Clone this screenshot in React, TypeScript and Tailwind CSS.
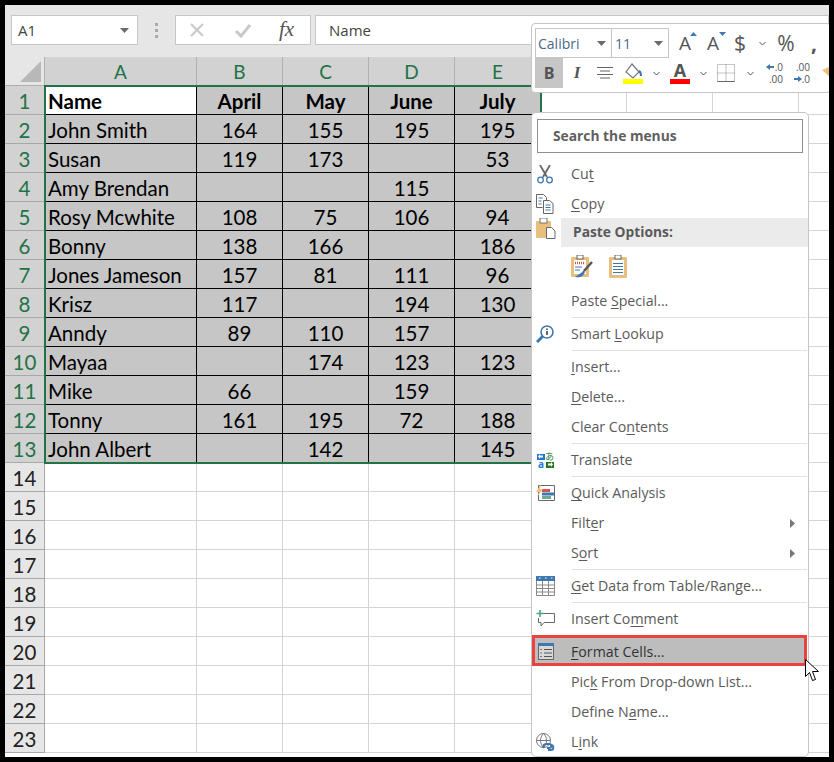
const cols = ["A", "B", "C", "D", "E", "F", "G", "H", "I"];

const rows: string[][] = [
  ["Name", "April", "May", "June", "July"],
  ["John Smith", "164", "155", "195", "195"],
  ["Susan", "119", "173", "", "53"],
  ["Amy Brendan", "", "", "115", ""],
  ["Rosy Mcwhite", "108", "75", "106", "94"],
  ["Bonny", "138", "166", "", "186"],
  ["Jones Jameson", "157", "81", "111", "96"],
  ["Krisz", "117", "", "194", "130"],
  ["Anndy", "89", "110", "157", ""],
  ["Mayaa", "", "174", "123", "123"],
  ["Mike", "66", "", "159", ""],
  ["Tonny", "161", "195", "72", "188"],
  ["John Albert", "", "142", "", "145"],
];

function Caret({ className }: { className: string }) {
  return (
    <svg width="9" height="5" viewBox="0 0 9 5" className={className}>
      <path d="M0 0h9L4.5 5z" fill="#6b6b6b" />
    </svg>
  );
}

function Chevron({ className }: { className: string }) {
  return (
    <svg width="7" height="5" viewBox="0 0 7 5" className={className}>
      <path d="M.5 1l3 3 3-3" fill="none" stroke="#555" />
    </svg>
  );
}

function FormulaBar() {
  return (
    <div className="h-[52px] bg-[#e6e6e6] flex items-start pt-[10px] pl-[6px] gap-[4px]">
      <div className="w-[127px] h-[30px] bg-white border border-[#c6c6c6] flex items-center justify-between pl-[6px] pr-[8px] text-[15px] text-[#444] font-['Open_Sans']">
        A1
        <Caret className="" />
      </div>
      <div className="w-[29px] h-[30px] flex flex-col items-center justify-center gap-[3px]">
        <div className="w-[3px] h-[3px] bg-[#aaa]" />
        <div className="w-[3px] h-[3px] bg-[#aaa]" />
        <div className="w-[3px] h-[3px] bg-[#aaa]" />
      </div>
      <div className="w-[136px] h-[30px] bg-white border border-[#c6c6c6] flex items-center pl-[13px]">
        <svg width="18" height="16" viewBox="0 0 18 16">
          <path d="M2 2l12 12M14 2L2 14" stroke="#c9c9c9" strokeWidth="2" fill="none" />
        </svg>
        <svg width="18" height="16" viewBox="0 0 18 16" className="ml-[27px]">
          <path d="M2 9l5 5L16 3" stroke="#c9c9c9" strokeWidth="3" fill="none" />
        </svg>
        <span className="ml-[27px] text-[21px] italic text-[#555] font-['Liberation_Serif']">fx</span>
      </div>
      <div className="flex-1 h-[30px] bg-white border border-[#c6c6c6] flex items-center pl-[13px] text-[15px] text-[#444] font-['Open_Sans']">
        Name
      </div>
    </div>
  );
}

function Sheet() {
  return (
    <div className="relative grid grid-cols-[40px_152px_repeat(8,86px)] font-['Lato'] text-[20.5px] leading-[30px] text-black">
      <div className="h-[29px] bg-[#e6e6e6] border-r border-b border-[#b0b0b0] flex items-center justify-end pr-[3px]">
        <svg width="21" height="21" viewBox="0 0 21 21">
          <path d="M21 0v21H0z" fill="#b8b8b8" />
        </svg>
      </div>
      {cols.map((c, i) => (
        <div
          key={c}
          className={
            i < 5
              ? "h-[29px] bg-[#d2d2d2] border-r border-[#b0b0b0] flex items-center justify-center text-[#217346] text-[19px]"
              : "h-[29px] bg-[#e6e6e6] border-r border-b border-[#b0b0b0] flex items-center justify-center text-[#444] text-[19px]"
          }
        >
          {c}
        </div>
      ))}
      {Array.from({ length: 23 }, (_, r) => {
        const row = rows[r];
        return (
          <div key={r} className="contents">
            <div
              className={
                row
                  ? "h-[29px] bg-[#d2d2d2] border-r border-b border-[#a8a8a8] text-[#217346] text-center"
                  : "h-[29px] bg-[#e6e6e6] border-r border-b border-[#a8a8a8] text-[#222] text-center"
              }
            >
              {r + 1}
            </div>
            {cols.map((c, i) => {
              const text = row && i < 5 ? row[i] : "";
              const inSel = !!row && i < 5;
              let cls = "h-[29px] border-r border-b border-[#d4d4d4] bg-white";
              if (inSel) cls = "h-[29px] border-r border-b border-black bg-[#c6c6c6]";
              if (inSel && r === 0 && i === 0) cls = "h-[29px] border-r border-b border-black bg-white";
              return (
                <div
                  key={c}
                  className={
                    cls +
                    (i === 0 ? " pl-[3px]" : " text-center") +
                    (r === 0 ? " font-bold" : "") +
                    " whitespace-nowrap overflow-hidden"
                  }
                >
                  {text}
                </div>
              );
            })}
          </div>
        );
      })}
      <div className="absolute left-[39px] top-[28px] w-[498px] h-[379px] border-2 border-[#217346] pointer-events-none" />
    </div>
  );
}

function MiniToolbar() {
  return (
    <div className="absolute left-[526px] top-[18px] w-[300px] h-[70px] bg-white border border-[#c6c6c6] rounded-[4px] overflow-hidden font-['Open_Sans'] text-[#555]">
      <div className="flex w-max items-center h-[30px] mt-[4px] ml-[3px]">
        <div className="w-[77px] h-[30px] border border-[#c6c6c6] flex items-center justify-between pl-[2px] pr-[5px] text-[14px] text-[#4a6a8a]">
          Calibri
          <Caret className="" />
        </div>
        <div className="w-[57px] h-[30px] border border-[#c6c6c6] border-l-0 flex items-center justify-between pl-[3px] pr-[5px] text-[14px] text-[#4a6a8a]">
          11
          <Caret className="" />
        </div>
        <div className="relative w-[28px] ml-[2px] text-center text-[19px] leading-none">
          A
          <svg width="7" height="4" viewBox="0 0 7 4" className="absolute right-[2px] top-[-2px]">
            <path d="M0 4l3.5-4L7 4z" fill="#3f78b0" />
          </svg>
        </div>
        <div className="relative w-[28px] text-center text-[19px] leading-none">
          A
          <svg width="7" height="4" viewBox="0 0 7 4" className="absolute right-[1px] top-[-2px]">
            <path d="M0 0l3.5 4L7 0z" fill="#3f78b0" />
          </svg>
        </div>
        <div className="w-[26px] text-center text-[21px] leading-none">$</div>
        <Chevron className="ml-[6px]" />
        <div className="w-[40px] text-center text-[21px] leading-none">%</div>
        <div className="w-[16px] text-center text-[21px] font-bold leading-none">,</div>
      </div>
      <div className="flex w-max items-center h-[30px] ml-[3px]">
        <div className="w-[28px] h-[30px] bg-[#c6c6c6] flex items-center justify-center text-[16px] font-bold">B</div>
        <div className="w-[28px] text-center text-[17px] font-bold italic font-['Liberation_Serif']">I</div>
        <svg width="28" height="14" viewBox="0 0 28 14">
          <path d="M6 1.5h16M9 5h10M6 8.5h16M9 12h10" stroke="#666" fill="none" />
        </svg>
        <svg width="22" height="22" viewBox="0 0 22 22" className="ml-[3px]">
          <path d="M10 2l7 8-6 6-7-6z" fill="none" stroke="#777" strokeWidth="1.2" />
          <path d="M17 9c2 1 2 3 2 5" stroke="#3f78b0" strokeWidth="2" fill="none" />
          <rect x="1" y="17" width="20" height="5" fill="#ffff00" />
        </svg>
        <Chevron className="ml-[9px]" />
        <div className="relative w-[20px] h-[22px] ml-[10px] text-center text-[18px] font-bold leading-[18px]">
          <span className="relative top-[-1px]">A</span>
          <div className="absolute left-0 bottom-0 w-[20px] h-[5px] bg-[#ff0000]" />
        </div>
        <Chevron className="ml-[10px]" />
        <svg width="18" height="18" viewBox="0 0 18 18" className="ml-[10px]">
          <path d="M.5.5h17v17H.5zM9 .5v17M.5 9h17" fill="none" stroke="#888" strokeDasharray="1 1" />
          <path d="M.5 17.5h17" stroke="#666" />
        </svg>
        <Chevron className="ml-[12px]" />
        <div className="relative w-[17px] h-[24px] ml-[12px] text-[10px] leading-[12px] text-right">
          <div>.0</div>
          <div>.00</div>
          <svg width="8" height="6" viewBox="0 0 8 6" className="absolute left-0 top-[3px]">
            <path d="M0 3l4-3v2h4v2H4v2z" fill="#3f78b0" />
          </svg>
        </div>
        <div className="relative w-[16px] h-[24px] ml-[11px] text-[10px] leading-[12px] text-right">
          <div>.00</div>
          <div>.0</div>
          <svg width="8" height="6" viewBox="0 0 8 6" className="absolute left-0 top-[15px]">
            <path d="M8 3L4 0v2H0v2h4v2z" fill="#3f78b0" />
          </svg>
        </div>
        <svg width="14" height="14" viewBox="0 0 14 14" className="ml-[12px]">
          <path d="M0 4l7-3 7 8-4 4z" fill="#eec183" />
        </svg>
      </div>
    </div>
  );
}

function IconCut() {
  return (
    <svg width="16" height="19" viewBox="0 0 16 19">
      <path d="M3 0l7 12M13 0L6 12" stroke="#666" strokeWidth="1.8" fill="none" />
      <circle cx="3.5" cy="15" r="2.8" fill="none" stroke="#3f78b0" strokeWidth="1.3" />
      <circle cx="12.5" cy="15" r="2.8" fill="none" stroke="#3f78b0" strokeWidth="1.3" />
    </svg>
  );
}

function IconCopy() {
  return (
    <svg width="18" height="20" viewBox="0 0 18 20">
      <path d="M.5.5h7l3 3v3M.5.5v13h6" fill="none" stroke="#666" />
      <path d="M7.5 6.5h6l3.5 3v10H7.5z" fill="#fff" stroke="#666" />
      <path d="M9.5 11h5M9.5 13.5h5M9.5 16h5M2.5 4h4M2.5 7h3M2.5 10h3" stroke="#3f78b0" />
    </svg>
  );
}

function IconPaste() {
  return (
    <svg width="20" height="21" viewBox="0 0 20 21">
      <rect x="0" y="3" width="15" height="17" rx="1" fill="#e8bf7c" />
      <rect x="4" y="0" width="7" height="5" fill="#fff" stroke="#777" />
      <path d="M10.5 9.5h5l3.5 3.5v7.5h-8.5z" fill="#fff" stroke="#666" />
    </svg>
  );
}

function IconPasteFormat() {
  return (
    <svg width="22" height="23" viewBox="0 0 22 23">
      <rect x="0" y="2" width="18" height="20" rx="1" fill="#e8bf7c" />
      <rect x="6" y="0" width="6" height="4" fill="#fff" stroke="#666" />
      <rect x="3" y="5" width="12" height="14" fill="#fff" />
      <path d="M4 8h10" stroke="#d9534f" strokeWidth="2.4" strokeDasharray="1 1" />
      <path d="M4 12h7M4 15h5" stroke="#3f78b0" />
      <path d="M21 7l-8 9" stroke="#555" strokeWidth="2.4" />
      <path d="M13 15l-3 3-6 4c4 1 8 0 10-5z" fill="#3f78b0" />
    </svg>
  );
}

function IconPasteValues() {
  return (
    <svg width="18" height="23" viewBox="0 0 18 23">
      <rect x="0" y="2" width="18" height="21" rx="1" fill="#e8bf7c" />
      <rect x="6" y="0" width="6" height="4" fill="#fff" stroke="#666" />
      <rect x="3" y="5" width="12" height="15" fill="#fff" />
      <path d="M4 8.5h10M4 11.5h10M4 14.5h10M4 17.5h10" stroke="#3f78b0" />
    </svg>
  );
}

function IconLookup() {
  return (
    <svg width="18" height="18" viewBox="0 0 18 18">
      <circle cx="11" cy="7" r="6" fill="#fff" stroke="#3f78b0" strokeWidth="1.6" />
      <path d="M7 11l-6 6" stroke="#3f78b0" strokeWidth="3" />
      <path d="M11 6v4" stroke="#555" strokeWidth="1.8" />
      <path d="M11 3.5v1.6" stroke="#555" strokeWidth="1.8" />
    </svg>
  );
}

function IconTranslate() {
  return (
    <svg width="17" height="18" viewBox="0 0 17 18" className="overflow-visible">
      <path d="M0 3h8v6H0z" fill="#1e78d2" />
      <path d="M6 4.5H3V3L1 5.5 3 8V6.5h3z" fill="#fff" />
      <path d="M9 11h8v6H9z" fill="#1f7a1f" />
      <path d="M11 12.5h3V11l2 2.5L14 16v-1.5h-3z" fill="#fff" />
      <text x="8" y="9" fontSize="9" fill="#1f7a1f" fontFamily="'Noto Sans CJK JP', sans-serif">あ</text>
      <text x="1" y="17" fontSize="10" fontWeight="700" fill="#1e78d2" fontFamily="'Open Sans', sans-serif">a</text>
    </svg>
  );
}

function IconQuick() {
  return (
    <svg width="19" height="18" viewBox="0 0 19 18">
      <path d="M2.5 1.5h16v15h-16z" fill="#fff" stroke="#666" />
      <path d="M6 5h8v3H6z" fill="#d9534f" />
      <path d="M6 8.5h12v3H6z" fill="#3f78b0" />
      <path d="M6 12h9v3H6z" fill="#6fa89a" />
      <path d="M5 0L0 8h3l-2 5 6-8H4z" fill="#eec183" />
    </svg>
  );
}

function IconTable() {
  return (
    <svg width="19" height="20" viewBox="0 0 19 20">
      <rect x="0" y="0" width="19" height="5" fill="#3f78b0" />
      <path d="M3 2h1.5M9 2h1.5M15 2h1.5" stroke="#fff" />
      <path d="M.5 5v14.5h18V5M.5 9h18M.5 12.5h18M.5 16h18M6.5 5v14.5M12.5 5v14.5" fill="none" stroke="#888" />
    </svg>
  );
}

function IconComment() {
  return (
    <svg width="19" height="18" viewBox="0 0 19 18">
      <path d="M7 3.5h11.5v9H8L5 16v-3.5H2.5V8" fill="none" stroke="#666" />
      <path d="M4 0v7M.5 3.5h7" stroke="#52a386" strokeWidth="1.6" />
    </svg>
  );
}

function IconFormat() {
  return (
    <svg width="16" height="17" viewBox="0 0 16 17">
      <rect x=".5" y=".5" width="15" height="16" fill="#d8d8d8" stroke="#666" />
      <rect x="0" y="0" width="16" height="3" fill="#3f78b0" />
      <path d="M6 6.5h8M6 10h8M6 13.5h8" stroke="#555" />
      <path d="M2 6.5h2M2 10h2M2 13.5h2" stroke="#777" />
    </svg>
  );
}

function IconLink() {
  return (
    <svg width="19" height="19" viewBox="0 0 19 19">
      <circle cx="7.5" cy="7.5" r="7" fill="none" stroke="#777" />
      <path d="M.5 7.5h14M7.5.5c-4 4-4 10 0 14M7.5.5c4 4 4 10 0 14" fill="none" stroke="#777" />
      <path d="M8 15c-2-3 1-4 3-4h2M11 15h2c3 0 3-4 0-4" fill="none" stroke="#3f78b0" strokeWidth="2" />
      <path d="M12 17h3c3 0 3-5 0-5" fill="none" stroke="#3f78b0" strokeWidth="2" />
    </svg>
  );
}

function Arrow() {
  return (
    <svg width="5" height="9" viewBox="0 0 5 9" className="ml-auto mr-[13px]">
      <path d="M0 0l5 4.5L0 9z" fill="#777" />
    </svg>
  );
}

function Item({
  h = 30,
  icon,
  arrow,
  children,
}: {
  h?: number;
  icon?: React.ReactNode;
  arrow?: boolean;
  children: React.ReactNode;
}) {
  return (
    <div className="flex items-center" style={{ height: h }}>
      <div className="w-[39px] flex items-center justify-center shrink-0 pr-[13px]">{icon}</div>
      <div className="whitespace-nowrap">{children}</div>
      {arrow && <Arrow />}
    </div>
  );
}

function Sep() {
  return <div className="h-[3px] pl-[40px] pr-[1px] pt-[1px]"><div className="h-px bg-[#e1e1e1]" /></div>;
}

function U({ children }: { children: string }) {
  return <span className="underline underline-offset-2">{children}</span>;
}

function ContextMenu() {
  return (
    <div className="absolute left-[526px] top-[107px] w-[278px] h-[645px] bg-white border border-[#c6c6c6] rounded-[5px] pt-[6px] font-['Open_Sans'] text-[14.2px] text-[#5a5a5a]">
      <div className="mx-[5px] h-[34px] border border-[#8f8f8f] flex items-center pl-[15px] font-bold text-[13.8px] text-[#5f5f5f]">
        Search the menus
      </div>
      <div className="mt-[6px]">
        <Item icon={<IconCut />}>Cu<U>t</U></Item>
        <Item h={29} icon={<IconCopy />}><U>C</U>opy</Item>
        <div className="relative h-[29px]">
          <div className="absolute left-0 top-[-1px]"><div className="w-[39px] flex justify-center pr-[11px] pt-[1px]"><IconPaste /></div></div>
          <div className="ml-[29px] mr-0 h-[29px] bg-[#ebebeb] flex items-center pl-[12px] font-bold text-[13.8px]">Paste Options:</div>
        </div>
        <div className="h-[39px] flex items-center pl-[39px] gap-[16px]">
          <IconPasteFormat />
          <IconPasteValues />
        </div>
        <Item>Paste <U>S</U>pecial...</Item>
        <Sep />
        <Item icon={<IconLookup />}>Smart <U>L</U>ookup</Item>
        <Sep />
        <Item><U>I</U>nsert...</Item>
        <Item><U>D</U>elete...</Item>
        <Item>Clear Co<U>n</U>tents</Item>
        <Sep />
        <Item icon={<IconTranslate />}>Translate</Item>
        <Sep />
        <Item icon={<IconQuick />}><U>Q</U>uick Analysis</Item>
        <Item arrow>Filt<U>e</U>r</Item>
        <Item arrow>S<U>o</U>rt</Item>
        <Sep />
        <Item icon={<IconTable />}><U>G</U>et Data from Table/Range...</Item>
        <Sep />
        <Item icon={<IconComment />}>Insert Co<U>m</U>ment</Item>
        <div className="h-[1px]" />
        <div className="h-[31px] mr-[1px] bg-[#bdbdbd] border-[3px] border-[#e8433f] flex items-center text-[#333] pt-[2px]">
          <div className="w-[36px] flex justify-start pl-[3px] shrink-0"><IconFormat /></div>
          <div><U>F</U>ormat Cells...</div>
        </div>
        <div className="h-[1px]" />
        <Item>Pic<U>k</U> From Drop-down List...</Item>
        <Item>Define N<U>a</U>me...</Item>
        <Item icon={<IconLink />}>L<U>i</U>nk</Item>
      </div>
    </div>
  );
}

function Cursor() {
  return (
    <svg width="16" height="24" viewBox="0 0 16 24" className="absolute left-[800px] top-[654px]">
      <path d="M.5.5v17l4-4 3 8 3-1-3-8h6z" fill="#fff" stroke="#000" />
    </svg>
  );
}

export default function App() {
  return (
    <div className="w-[834px] h-[762px] bg-black p-[5px]">
      <div className="relative w-[824px] h-[752px] overflow-hidden bg-white">
        <FormulaBar />
        <Sheet />
        <MiniToolbar />
        <ContextMenu />
        <Cursor />
      </div>
    </div>
  );
}
